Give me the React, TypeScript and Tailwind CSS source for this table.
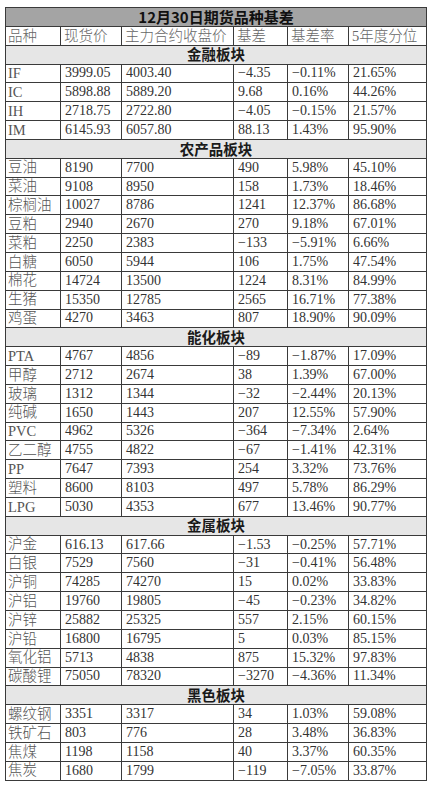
import React from "react"

type Row = [string, string, string, string, string, string]

const sections: { title: string; rows: Row[] }[] = [
  {
    title: "金融板块",
    rows: [
      ["IF", "3999.05", "4003.40", "−4.35", "−0.11%", "21.65%"],
      ["IC", "5898.88", "5889.20", "9.68", "0.16%", "44.26%"],
      ["IH", "2718.75", "2722.80", "−4.05", "−0.15%", "21.57%"],
      ["IM", "6145.93", "6057.80", "88.13", "1.43%", "95.90%"],
    ],
  },
  {
    title: "农产品板块",
    rows: [
      ["豆油", "8190", "7700", "490", "5.98%", "45.10%"],
      ["菜油", "9108", "8950", "158", "1.73%", "18.46%"],
      ["棕榈油", "10027", "8786", "1241", "12.37%", "86.68%"],
      ["豆粕", "2940", "2670", "270", "9.18%", "67.01%"],
      ["菜粕", "2250", "2383", "−133", "−5.91%", "6.66%"],
      ["白糖", "6050", "5944", "106", "1.75%", "47.54%"],
      ["棉花", "14724", "13500", "1224", "8.31%", "84.99%"],
      ["生猪", "15350", "12785", "2565", "16.71%", "77.38%"],
      ["鸡蛋", "4270", "3463", "807", "18.90%", "90.09%"],
    ],
  },
  {
    title: "能化板块",
    rows: [
      ["PTA", "4767", "4856", "−89", "−1.87%", "17.09%"],
      ["甲醇", "2712", "2674", "38", "1.39%", "67.00%"],
      ["玻璃", "1312", "1344", "−32", "−2.44%", "20.13%"],
      ["纯碱", "1650", "1443", "207", "12.55%", "57.90%"],
      ["PVC", "4962", "5326", "−364", "−7.34%", "2.64%"],
      ["乙二醇", "4755", "4822", "−67", "−1.41%", "42.31%"],
      ["PP", "7647", "7393", "254", "3.32%", "73.76%"],
      ["塑料", "8600", "8103", "497", "5.78%", "86.29%"],
      ["LPG", "5030", "4353", "677", "13.46%", "90.77%"],
    ],
  },
  {
    title: "金属板块",
    rows: [
      ["沪金", "616.13", "617.66", "−1.53", "−0.25%", "57.71%"],
      ["白银", "7529", "7560", "−31", "−0.41%", "56.48%"],
      ["沪铜", "74285", "74270", "15", "0.02%", "33.83%"],
      ["沪铝", "19760", "19805", "−45", "−0.23%", "34.82%"],
      ["沪锌", "25882", "25325", "557", "2.15%", "60.15%"],
      ["沪铅", "16800", "16795", "5", "0.03%", "85.15%"],
      ["氧化铝", "5713", "4838", "875", "15.32%", "97.83%"],
      ["碳酸锂", "75050", "78320", "−3270", "−4.36%", "11.34%"],
    ],
  },
  {
    title: "黑色板块",
    rows: [
      ["螺纹钢", "3351", "3317", "34", "1.03%", "59.08%"],
      ["铁矿石", "803", "776", "28", "3.48%", "36.83%"],
      ["焦煤", "1198", "1158", "40", "3.37%", "60.35%"],
      ["焦炭", "1680", "1799", "−119", "−7.05%", "33.87%"],
    ],
  },
]

const headers = ["品种", "现货价", "主力合约收盘价", "基差", "基差率", "5年度分位"]

const serif = "font-['Liberation_Serif','Noto_Sans_CJK_SC',serif]"
const sans = "font-['Noto_Sans_CJK_SC','Liberation_Sans',sans-serif]"

export default function App() {
  return (
    <div className="bg-white w-[431px] h-[787px] pt-[7px] pl-[5px]">
      <table className="table-fixed border-collapse w-[421px] border border-[#3a3a3a]">
        <colgroup>
          <col className="w-[55px]" />
          <col className="w-[61px]" />
          <col className="w-[112px]" />
          <col className="w-[54px]" />
          <col className="w-[61px]" />
          <col className="w-[78px]" />
        </colgroup>
        <tbody>
          <tr className="h-[18.85px] bg-[#a4a4a4]">
            <td colSpan={6} className={`${sans} border border-[#3a3a3a] text-center text-[15px] font-bold leading-none text-[#111] p-0`}>
              12月30日期货品种基差
            </td>
          </tr>
          <tr className="h-[18.85px]">
            {headers.map((h, i) => (
              <td
                key={h}
                className={`${serif} border border-[#3a3a3a] text-[14.5px] font-light leading-none text-[#666] p-0 whitespace-nowrap overflow-hidden ${i === 0 ? "pl-[2px]" : "pl-[3px]"}`}
              >
                {h}
              </td>
            ))}
          </tr>
          {sections.map((s) => (
            <React.Fragment key={s.title}>
              <tr className="h-[18.85px] bg-[#e6e6e6]">
                <td colSpan={6} className={`${sans} border border-[#3a3a3a] text-center text-[14.5px] font-bold leading-none text-[#1a1a1a] p-0`}>
                  {s.title}
                </td>
              </tr>
              {s.rows.map((r) => (
                <tr key={r[0]} className="h-[18.85px]">
                  {r.map((c, i) => (
                    <td
                      key={i}
                      className={`${serif} border border-[#3a3a3a] leading-none p-0 whitespace-nowrap ${
                        i === 0
                          ? "pl-[2px] text-[14.5px] font-light text-[#555]"
                          : "pl-[4px] text-[14px] text-[#333]"
                      }`}
                    >
                      {c}
                    </td>
                  ))}
                </tr>
              ))}
            </React.Fragment>
          ))}
        </tbody>
      </table>
    </div>
  )
}
